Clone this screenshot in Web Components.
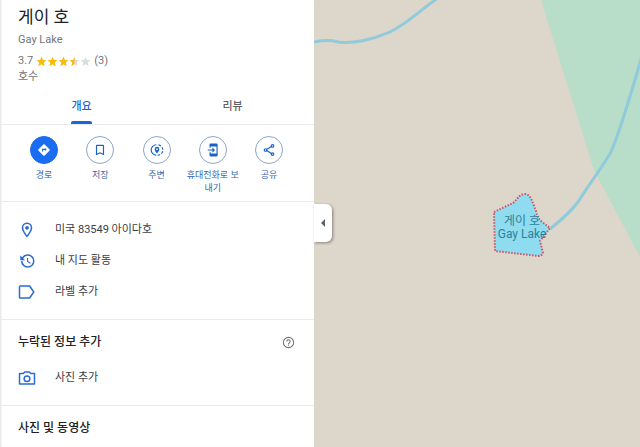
<!DOCTYPE html>
<html lang="ko">
<head>
<meta charset="utf-8">
<meta name="viewport" content="width=device-width, initial-scale=1">
<title>게이 호</title>
<style>
  body {
    margin: 0;
    font-family: Roboto, "Noto Sans CJK KR", sans-serif;
    font-size: 11px;
    line-height: 16px;
    color: #3c4043;
  }
</style>
</head>
<body>
<map-app></map-app>

<script>
const icons = {
  directions: '<path fill="currentColor" d="M21.7 11.3l-9-9a1 1 0 0 0-1.4 0l-9 9a1 1 0 0 0 0 1.4l9 9a1 1 0 0 0 1.4 0l9-9a1 1 0 0 0 0-1.4zM13.500 14v-2H10.500v2.500H8.500V11a1 1 0 0 1 1-1h4V8l3 3z"/>',
  bookmark: '<path fill="currentColor" d="M17 3H7a2 2 0 0 0-2 2v16l7-3 7 3V5a2 2 0 0 0-2-2zm0 15l-5-2.2L7 18V5h10z"/>',
  nearby: '<g fill="none" stroke="currentColor" stroke-width="2"><path d="M11 3a9 9 0 0 0 0 18"/><path stroke-dasharray="4.5 2.6" d="M13 21a9 9 0 0 0 0-18"/></g><path fill="currentColor" d="M12 6.5a4 4 0 0 0-4 4c0 2.8 4 7 4 7s4-4.200 4-7a4 4 0 0 0-4-4zm0 5.500a1.500 1.500 0 1 1 0-3 1.500 1.500 0 0 1 0 3z"/>',
  phone: '<path fill="currentColor" d="M18 1H8a2 2 0 0 0-2 2v5h2V6h10v12H8v-2H6v5a2 2 0 0 0 2 2h10a2 2 0 0 0 2-2V3a2 2 0 0 0-2-2zM11 7.500v3.500H3v2h8v3.500l4.500-4.500z"/>',
  share: '<g fill="none" stroke="currentColor" stroke-width="2"><circle cx="18" cy="5" r="2.200"/><circle cx="6" cy="12" r="2.200"/><circle cx="18" cy="19" r="2.200"/><path d="M8 11l8-4.800M8 13l8 4.800"/></g>',
  place: '<path fill="currentColor" d="M12 2a7 7 0 0 0-7 7c0 5.200 7 13 7 13s7-7.800 7-13a7 7 0 0 0-7-7zM7 9a5 5 0 0 1 10 0c0 2.900-2.900 7.200-5 9.900C9.900 16.200 7 11.800 7 9z"/><circle cx="12" cy="9" r="2.500" fill="currentColor"/>',
  history: '<path fill="currentColor" d="M13 3a9 9 0 0 0-7.500 4L3 4.500V11h6.500L7 8.500A7 7 0 1 1 6 12H4a9 9 0 1 0 9-9zm-1 5v5l4.300 2.500.700-1.200-3.500-2.100V8z"/>',
  label: '<path fill="none" stroke="currentColor" stroke-width="2" stroke-linejoin="round" d="M3 4h12.500L21 12l-5.500 8H3a1 1 0 0 1-1-1V5a1 1 0 0 1 1-1z"/>',
  camera: '<g fill="none" stroke="currentColor" stroke-width="2" stroke-linejoin="round"><path d="M2 6h5l2-2h6l2 2h5v14H2z"/><circle cx="12" cy="13" r="3.800"/></g>',
  help: '<circle cx="12" cy="12" r="9.500" fill="none" stroke="currentColor" stroke-width="2"/><path fill="none" stroke="currentColor" stroke-width="2" d="M9 10a3 3 0 1 1 4.700 2.400C12.600 13.200 12 13.700 12 15"/><path fill="currentColor" d="M11 16h2v2h-2z"/>'
};

class MapIcon extends HTMLElement {
  constructor() {
    super();
    this.attachShadow({ mode: 'open' });
  }

  connectedCallback() {
    this.shadowRoot.innerHTML = `
      <style>
        :host { display: block; width: 18px; height: 18px; }
        svg { display: block; width: 100%; height: 100%; }
      </style>
      <svg viewBox="0 0 24 24" aria-hidden="true">${icons[this.getAttribute('name')]}</svg>
    `;
  }
}

class StarRating extends HTMLElement {
  constructor() {
    super();
    this.attachShadow({ mode: 'open' });
  }

  connectedCallback() {
    const value = Number(this.getAttribute('value'));
    const star = 'M6 .8l1.500 3.600 3.900.300-3 2.500 1 3.800L6 8.900 2.600 11l1-3.800-3-2.500 3.900-.300z';
    let stars = '';
    for (let i = 0; i < 5; i++) {
      const fill = Math.round(Math.min(1, Math.max(0, value - i)) * 2) / 2;
      stars += `<svg viewBox="0 0 12 12">
        <path fill="#dadce0" d="${star}"/>
        <path fill="#fbbc04" d="${star}" style="clip-path: inset(0 ${100 - fill * 100}% 0 0)"/>
      </svg>`;
    }
    this.shadowRoot.innerHTML = `
      <style>
        :host { display: flex; }
        svg { display: block; width: 11px; height: 11px; }
      </style>
      ${stars}
    `;
  }
}

class PlaceHeader extends HTMLElement {
  constructor() {
    super();
    this.attachShadow({ mode: 'open' }).innerHTML = `
      <style>
        :host { display: block; padding: 5px 18px 0; color: #70757a; }
        h1 { margin: 0; font-size: 17px; line-height: 24px; font-weight: 400; color: #202124; }
        .local { margin: 3px 0 5px; }
        .rating { display: flex; align-items: center; gap: 3px; }
      </style>
      <h1><slot name="title"></slot></h1>
      <div class="local"><slot name="local"></slot></div>
      <div class="rating"><slot name="rating"></slot></div>
      <div><slot></slot></div>
    `;
  }
}

class PlaceTab extends HTMLElement {
  constructor() {
    super();
    this.attachShadow({ mode: 'open' }).innerHTML = `
      <style>
        :host { display: flex; flex: 1; justify-content: center; }
        button {
          padding: 9px 0 0;
          border: 0;
          background: none;
          font: inherit;
          font-weight: 500;
          color: #5f6368;
          cursor: pointer;
        }
        button::after {
          content: "";
          display: block;
          height: 3px;
          margin-top: 6px;
          border-radius: 2px 2px 0 0;
        }
        :host([selected]) button { color: #1967d2; }
        :host([selected]) button::after { background: #1967d2; }
      </style>
      <button><slot></slot></button>
    `;
  }
}

class PlaceTabs extends HTMLElement {
  constructor() {
    super();
    this.attachShadow({ mode: 'open' }).innerHTML = `
      <style>
        :host { display: flex; margin-top: 5px; padding: 0 6px; border-bottom: 1px solid #e8eaed; }
      </style>
      <slot></slot>
    `;
  }
}

class ActionButton extends HTMLElement {
  constructor() {
    super();
    this.attachShadow({ mode: 'open' });
  }

  connectedCallback() {
    this.shadowRoot.innerHTML = `
      <style>
        :host { display: block; flex: 1; }
        button {
          display: flex;
          flex-direction: column;
          align-items: center;
          gap: 5px;
          width: 100%;
          padding: 0;
          border: 0;
          background: none;
          font: inherit;
          font-size: 9px;
          line-height: 13px;
          color: #3367b0;
          cursor: pointer;
        }
        .circle {
          display: grid;
          place-items: center;
          box-sizing: border-box;
          width: 28px;
          height: 28px;
          border: 1px solid #8ba6c9;
          border-radius: 50%;
          color: #1a62c6;
        }
        :host([primary]) .circle { border-color: #1a6cf0; background: #1a6cf0; color: #fff; }
        map-icon { width: 14px; height: 14px; }
      </style>
      <button>
        <span class="circle"><map-icon name="${this.getAttribute('icon')}"></map-icon></span>
        <span><slot></slot></span>
      </button>
    `;
  }
}

class ActionBar extends HTMLElement {
  constructor() {
    super();
    this.attachShadow({ mode: 'open' }).innerHTML = `
      <style>
        :host { display: flex; padding: 11px 17px 6px 16px; border-bottom: 1px solid #e8eaed; }
      </style>
      <slot></slot>
    `;
  }
}

class InfoRow extends HTMLElement {
  constructor() {
    super();
    this.attachShadow({ mode: 'open' });
  }

  connectedCallback() {
    this.shadowRoot.innerHTML = `
      <style>
        :host { display: block; }
        button {
          display: flex;
          align-items: center;
          gap: 19px;
          width: 100%;
          height: 31px;
          padding: 1px 18px 0;
          border: 0;
          background: none;
          font: inherit;
          color: inherit;
          text-align: left;
          cursor: pointer;
        }
        map-icon { color: #2a6bd4; }
      </style>
      <button>
        <map-icon name="${this.getAttribute('icon')}"></map-icon>
        <span><slot></slot></span>
      </button>
    `;
  }
}

class InfoSection extends HTMLElement {
  constructor() {
    super();
    this.attachShadow({ mode: 'open' }).innerHTML = `
      <style>
        :host { display: block; padding: 12px 0; border-bottom: 1px solid #e8eaed; }
        ::slotted(h2) {
          display: flex;
          align-items: center;
          justify-content: space-between;
          margin: 0 19px 10px 18px;
          font-size: 12px;
          line-height: 20px;
          font-weight: 500;
          color: #202124;
        }
      </style>
      <slot></slot>
    `;
  }
}

class HelpButton extends HTMLElement {
  constructor() {
    super();
    this.attachShadow({ mode: 'open' }).innerHTML = `
      <style>
        :host { display: block; }
        button { display: block; padding: 0; border: 0; background: none; color: #70757a; cursor: pointer; }
        map-icon { width: 13px; height: 13px; }
      </style>
      <button aria-label="도움말"><map-icon name="help"></map-icon></button>
    `;
  }
}

class PlacePanel extends HTMLElement {
  constructor() {
    super();
    this.attachShadow({ mode: 'open' }).innerHTML = `
      <style>
        :host {
          display: block;
          overflow: hidden;
          background: #fff;
          box-shadow: inset 2px 0 2px -1px rgba(0, 0, 0, .12), 0 0 3px rgba(0, 0, 0, .4);
        }
      </style>
      <place-header>
        <span slot="title">게이 호</span>
        <span slot="local">Gay Lake</span>
        <span slot="rating">3.7</span>
        <star-rating slot="rating" value="3.7"></star-rating>
        <span slot="rating">(3)</span>
        호수
      </place-header>
      <place-tabs>
        <place-tab selected>개요</place-tab>
        <place-tab>리뷰</place-tab>
      </place-tabs>
      <action-bar>
        <action-button icon="directions" primary>경로</action-button>
        <action-button icon="bookmark">저장</action-button>
        <action-button icon="nearby">주변</action-button>
        <action-button icon="phone">휴대전화로 보내기</action-button>
        <action-button icon="share">공유</action-button>
      </action-bar>
      <info-section>
        <info-row icon="place">미국 83549 아이다호</info-row>
        <info-row icon="history">내 지도 활동</info-row>
        <info-row icon="label">라벨 추가</info-row>
      </info-section>
      <info-section>
        <h2>누락된 정보 추가 <help-button></help-button></h2>
        <info-row icon="camera">사진 추가</info-row>
      </info-section>
      <info-section>
        <h2>사진 및 동영상</h2>
      </info-section>
    `;
  }
}

class MapView extends HTMLElement {
  constructor() {
    super();
    this.attachShadow({ mode: 'open' }).innerHTML = `
      <style>
        :host { display: block; overflow: hidden; background: #ddd6ca; }
        svg { display: block; width: 100%; height: 100%; overflow: visible; }
        text { font-size: 12px; fill: #2c8298; text-anchor: middle; }
      </style>
      <svg>
        <path fill="#b8ddc8" d="M227 0L280 170L326 257V0z"/>
        <g fill="none" stroke="#90cbdc" stroke-width="3">
          <path d="M0 42C10 40 17 40 24 42C38 44 58 40 76 32C96 22 106 10 124 -2"/>
          <path d="M236 229C246 221 256 213 264 202C274 186 287 169 297 152C306 132 316 97 328 56"/>
        </g>
        <path fill="#8fdbf0" d="M180 212L199 203C204 199 205 194 211 194C217 194 219 204 222 211C224 219 224 219 236 228L226 241L229 253Q228 256 224 256L181 251z"/>
        <path fill="none" stroke="#cc5566" stroke-width="2" stroke-dasharray="1.500 1.500"
          d="M180 212L199 203C204 199 205 194 211 194C217 194 219 204 222 211C224 219 224 219 236 228L226 241L229 253Q228 256 224 256L181 251z"/>
        <text x="208" y="225">게이 호</text>
        <text x="208" y="238">Gay Lake</text>
      </svg>
    `;
  }
}

class PanelToggle extends HTMLElement {
  constructor() {
    super();
    this.attachShadow({ mode: 'open' }).innerHTML = `
      <style>
        :host { display: block; }
        button {
          display: grid;
          place-items: center;
          width: 18px;
          height: 38px;
          padding: 0;
          border: 0;
          border-radius: 0 6px 6px 0;
          background: #fff;
          box-shadow: 1px 1px 3px rgba(0, 0, 0, .4);
          cursor: pointer;
        }
        svg { display: block; width: 4px; height: 8px; }
      </style>
      <button aria-label="측면 패널 접기">
        <svg viewBox="0 0 4 8"><path fill="#5f6368" d="M4 0v8L0 4z"/></svg>
      </button>
    `;
  }
}

class MapApp extends HTMLElement {
  constructor() {
    super();
    this.attachShadow({ mode: 'open' }).innerHTML = `
      <style>
        :host {
          display: grid;
          grid-template-columns: 314px 1fr;
          grid-template-rows: 100%;
          height: 100vh;
          overflow: hidden;
        }
        place-panel { position: relative; }
        .map { position: relative; min-width: 0; display: grid; }
        /* the handle lies over the map, halfway down */
        .handle { position: absolute; top: 0; bottom: 2px; left: 0; display: flex; align-items: center; }
      </style>
      <place-panel></place-panel>
      <div class="map">
        <map-view></map-view>
        <div class="handle"><panel-toggle></panel-toggle></div>
      </div>
    `;
  }
}

customElements.define('map-icon', MapIcon);
customElements.define('star-rating', StarRating);
customElements.define('place-header', PlaceHeader);
customElements.define('place-tab', PlaceTab);
customElements.define('place-tabs', PlaceTabs);
customElements.define('action-button', ActionButton);
customElements.define('action-bar', ActionBar);
customElements.define('info-row', InfoRow);
customElements.define('info-section', InfoSection);
customElements.define('help-button', HelpButton);
customElements.define('place-panel', PlacePanel);
customElements.define('map-view', MapView);
customElements.define('panel-toggle', PanelToggle);
customElements.define('map-app', MapApp);
</script>
</body>
</html>
